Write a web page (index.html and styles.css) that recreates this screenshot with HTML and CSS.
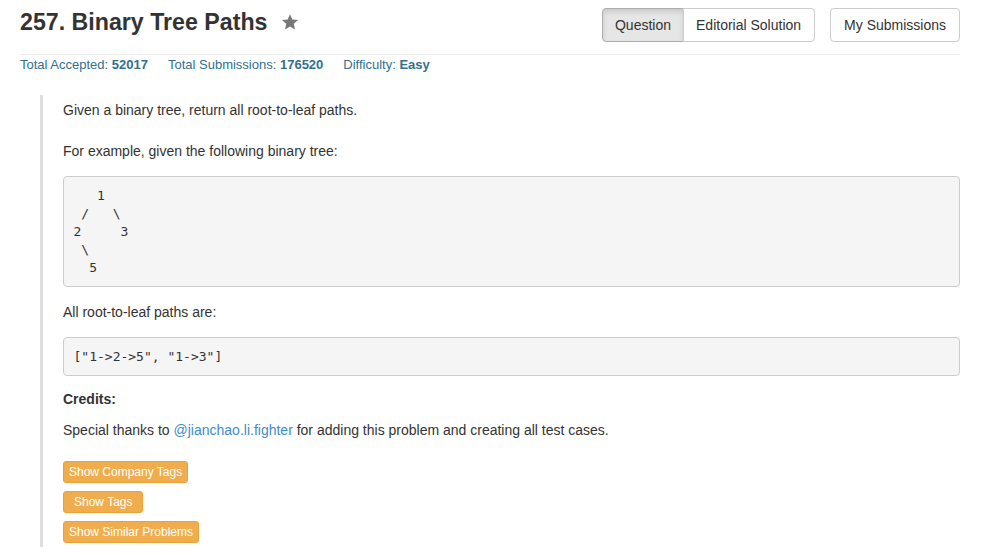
FILE: index.html
```html
<!DOCTYPE html>
<html>
<head>
<meta charset="utf-8">
<link rel="stylesheet" href="styles.css">
</head>
<body>
<div class="page">
  <div class="header">
    <h3 class="title">257. Binary Tree Paths
      <svg class="star" width="18" height="18" viewBox="0 0 24 24"><polygon points="12,1.5 15.1,8.6 22.8,9.3 17,14.4 18.7,22 12,18 5.3,22 7,14.4 1.2,9.3 8.9,8.6" fill="#777"/></svg>
    </h3>
    <div class="actions">
      <div class="btn-group">
        <span class="btn active">Question</span>
        <span class="btn editorial">Editorial Solution</span>
      </div>
      <span class="btn submissions">My Submissions</span>
    </div>
  </div>
  <div class="stats">
    <span class="stat">Total Accepted: <strong>52017</strong></span>
    <span class="stat">Total Submissions: <strong>176520</strong></span>
    <span class="stat">Difficulty: <strong>Easy</strong></span>
  </div>
  <div class="question">
    <p class="gap">Given a binary tree, return all root-to-leaf paths.</p>
    <p>For example, given the following binary tree:</p>
<pre>   1
 /   \
2     3
 \
  5</pre>
    <p>All root-to-leaf paths are:</p>
<pre class="result">["1-&gt;2-&gt;5", "1-&gt;3"]</pre>
    <p class="credits"><strong>Credits:</strong></p>
    <p class="thanks">Special thanks to <a href="#">@jianchao.li.fighter</a> for adding this problem and creating all test cases.</p>
    <div class="tags">
      <span class="tag-btn">Show Company Tags</span>
      <span class="tag-btn wide">Show Tags</span>
      <span class="tag-btn">Show Similar Problems</span>
    </div>
  </div>
</div>
</body>
</html>
```
FILE: styles.css
```css
* { box-sizing: border-box; }
body {
  margin: 0;
  font-family: "Liberation Sans", Arial, sans-serif;
  font-size: 14px;
  color: #333;
  background: #fff;
}
.page {
  width: 940px;
  margin-left: 20px;
}
.header {
  display: flex;
  justify-content: space-between;
  align-items: center;
  padding: 8px 0 12px;
  border-bottom: 1px solid #eee;
}
.title {
  margin: 0;
  font-size: 23.2px;
  font-weight: bold;
  line-height: 28px;
  color: #333;
  display: flex;
  align-items: center;
  margin-top: -6px;
}
.star {
  margin-left: 14px;
}
.actions {
  display: flex;
  gap: 15px;
}
.btn-group {
  display: flex;
}
.btn {
  display: inline-block;
  padding: 6px 12px;
  font-size: 14px;
  line-height: 20px;
  border: 1px solid #ccc;
  border-radius: 4px;
  background: #fff;
  color: #333;
}
.btn-group .btn:first-child {
  border-top-right-radius: 0;
  border-bottom-right-radius: 0;
}
.btn-group .btn:last-child {
  border-top-left-radius: 0;
  border-bottom-left-radius: 0;
  margin-left: -1px;
}
.btn.editorial { padding: 6px 13px 6px 12px; }
.btn.submissions { padding: 6px 13px; }
.btn.active {
  background: #e6e6e6;
  border-color: #adadad;
  box-shadow: inset 0 3px 5px rgba(0,0,0,0.125);
}
.stats {
  display: flex;
  gap: 20px;
  font-size: 13px;
  line-height: 18px;
  color: #31708f;
  margin-top: 1px;
}
.stats strong { font-weight: bold; }
.question {
  margin: 21px 0 0 20px;
  border-left: 3px solid #ddd;
  padding: 5px 0 4px 20px;
}
.question p {
  margin: 0 0 15px;
  line-height: 20px;
}
.question p.gap { margin-bottom: 21px; }
pre {
  margin: 0 0 15px;
  padding: 9.5px;
  font-family: "DejaVu Sans Mono", Menlo, monospace;
  font-size: 13px;
  line-height: 18px;
  color: #333;
  background: #f5f5f5;
  border: 1px solid #ccc;
  border-radius: 4px;
}
pre.result { margin-bottom: 13px; }
.question p.credits { margin-bottom: 11px; }
.question p.thanks { margin-bottom: 21px; }
a { color: #428bca; text-decoration: none; }
.tags {
  display: flex;
  flex-direction: column;
  align-items: flex-start;
  gap: 8px;
}
.tag-btn {
  display: inline-block;
  padding: 1px 5px;
  font-size: 12px;
  line-height: 18px;
  color: #fff;
  background: #f0ad4e;
  border: 1px solid #eea236;
  border-radius: 3px;
}
.tag-btn.wide { padding: 1px 10px; }
```
